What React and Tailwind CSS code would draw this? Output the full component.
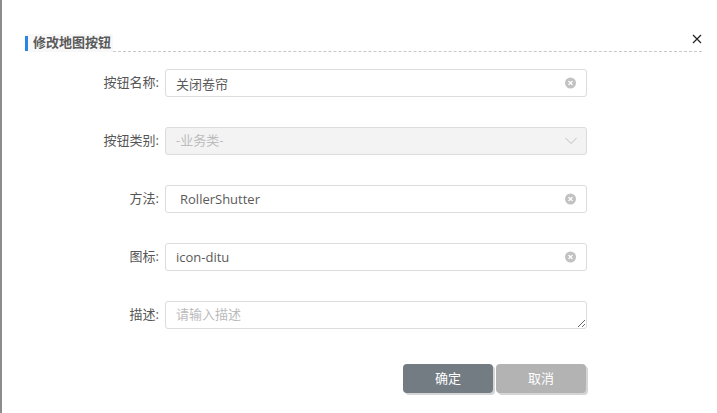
import React from 'react';

const ClearIcon = () => (
    <span className="absolute right-[11px] top-1/2 -translate-y-1/2 w-[11px] h-[11px] rounded-full bg-[#c2c2c2] flex items-center justify-center">
        <svg width="5" height="5" viewBox="0 0 5 5">
            <path d="M0.5 0.5 L4.5 4.5 M4.5 0.5 L0.5 4.5" stroke="#fff" strokeWidth="1.2" />
        </svg>
    </span>
);

const Row = ({ label, children }) => (
    <div className="flex items-center h-[28px]">
        <label className="w-[159px] pr-[2px] text-right text-[13px] text-[#555]">{label}:</label>
        <div className="ml-[4px] w-[422px] relative h-full">{children}</div>
    </div>
);

const inputCls = "w-full h-full border border-[#dcdcdc] rounded-[3px] pl-[10px] pr-[30px] text-[13px] text-[#5a5a5a] outline-none bg-white";

const App = () => {
    return (
        <div
            className="flex h-[413px] w-full bg-white overflow-hidden"
            style={{ fontFamily: '"Open Sans", "Noto Sans CJK SC", sans-serif' }}
        >
            <div className="w-[2px] bg-[#8c8c8c] shrink-0" />
            <div className="flex-1 relative">
                {/* header */}
                <div className="flex items-end ml-[23px] mr-[15px] mt-[34px]">
                    <div className="flex items-center h-[18px] bg-[#f8f8f8] pr-[2px]">
                        <span className="w-[3px] h-[15px] bg-[#2b85e4]" />
                        <span className="ml-[5px] text-[13px] font-bold text-[#5a5a5a]">修改地图按钮</span>
                    </div>
                    <div className="flex-1 border-b border-dashed border-[#c8c8c8]" />
                </div>
                <button className="absolute right-[15px] top-[34px] text-[#222]">
                    <svg width="10" height="10" viewBox="0 0 10 10">
                        <path d="M1 1 L9 9 M9 1 L1 9" stroke="#222" strokeWidth="1.2" />
                    </svg>
                </button>

                {/* form */}
                <div className="flex flex-col gap-[30px] mt-[17px]">
                    <Row label="按钮名称">
                        <input className={inputCls} defaultValue="关闭卷帘" />
                        <ClearIcon />
                    </Row>
                    <Row label="按钮类别">
                        <div className="w-full h-full border border-[#dcdcdc] rounded-[3px] bg-[#f3f3f3] pl-[10px] flex items-center text-[13px] text-[#bcbcbc]">
                            -业务类-
                        </div>
                        <svg className="absolute right-[10px] top-1/2 -translate-y-1/2" width="12" height="7" viewBox="0 0 12 7">
                            <path d="M0.5 0.5 L6 6 L11.5 0.5" fill="none" stroke="#bdbdbd" strokeWidth="1" />
                        </svg>
                    </Row>
                    <Row label="方法">
                        <input className={inputCls + " pl-[14px]"} defaultValue="RollerShutter" />
                        <ClearIcon />
                    </Row>
                    <Row label="图标">
                        <input className={inputCls} defaultValue="icon-ditu" />
                        <ClearIcon />
                    </Row>
                    <Row label="描述">
                        <textarea
                            className="w-full h-full border border-[#dcdcdc] rounded-[3px] pl-[10px] pt-[3px] text-[13px] text-[#555] outline-none placeholder:text-[#bbb] block"
                            placeholder="请输入描述"
                        />
                    </Row>
                </div>

                {/* buttons */}
                <div className="flex gap-[3px] ml-[401px] mt-[35px]">
                    <button className="w-[90px] h-[29px] rounded-[4px] bg-[#737b83] text-white text-[13px] shadow-[2px_2px_0_#d5d5d5]">
                        确定
                    </button>
                    <button className="w-[90px] h-[29px] rounded-[4px] bg-[#b3b3b3] text-white text-[13px] shadow-[2px_2px_0_#d5d5d5]">
                        取消
                    </button>
                </div>
            </div>
        </div>
    );
};

export default App;
